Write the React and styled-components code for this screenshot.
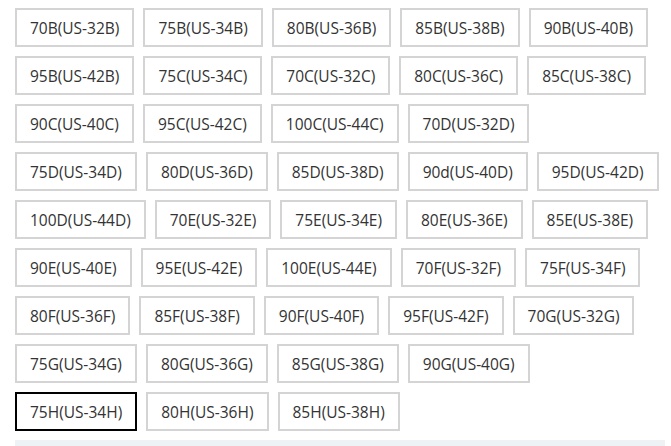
import React from 'react'
import styled, { createGlobalStyle } from 'styled-components'

const Global = createGlobalStyle`
  body {
    margin: 0;
    background: #fff;
    font-family: "Open Sans", "Liberation Sans", sans-serif;
  }
`

const Wrapper = styled.div`
  display: flex;
  flex-direction: column;
  gap: 9px;
  padding: 8px 6px 0 15px;
  width: 671px;
  box-sizing: border-box;
`

const Row = styled.div`
  display: flex;
  gap: 9px;
`

const SizeBox = styled.div`
  height: 39px;
  box-sizing: border-box;
  display: flex;
  align-items: center;
  justify-content: center;
  padding: 0 13px;
  border: 2px solid ${p => (p.$active ? '#000' : '#d4d4d4')};
  background: #fff;
  color: #333;
  font-size: 15.5px;
  white-space: nowrap;
  cursor: pointer;
`

const Strip = styled.div`
  height: 12px;
  background: #eff2f4;
  width: 650px;
`

const rows = [
  ['70B(US-32B)', '75B(US-34B)', '80B(US-36B)', '85B(US-38B)', '90B(US-40B)'],
  ['95B(US-42B)', '75C(US-34C)', '70C(US-32C)', '80C(US-36C)', '85C(US-38C)'],
  ['90C(US-40C)', '95C(US-42C)', '100C(US-44C)', '70D(US-32D)'],
  ['75D(US-34D)', '80D(US-36D)', '85D(US-38D)', '90d(US-40D)', '95D(US-42D)'],
  ['100D(US-44D)', '70E(US-32E)', '75E(US-34E)', '80E(US-36E)', '85E(US-38E)'],
  ['90E(US-40E)', '95E(US-42E)', '100E(US-44E)', '70F(US-32F)', '75F(US-34F)'],
  ['80F(US-36F)', '85F(US-38F)', '90F(US-40F)', '95F(US-42F)', '70G(US-32G)'],
  ['75G(US-34G)', '80G(US-36G)', '85G(US-38G)', '90G(US-40G)'],
  ['75H(US-34H)', '80H(US-36H)', '85H(US-38H)'],
]

const App = () => {
  const selected = '75H(US-34H)'
  return (
    <>
      <Global />
      <Wrapper>
        {rows.map((row, i) => (
          <Row key={i}>
            {row.map(size => (
              <SizeBox key={size} $active={size === selected}>
                {size}
              </SizeBox>
            ))}
          </Row>
        ))}
        <Strip />
      </Wrapper>
    </>
  )
}

export default App
